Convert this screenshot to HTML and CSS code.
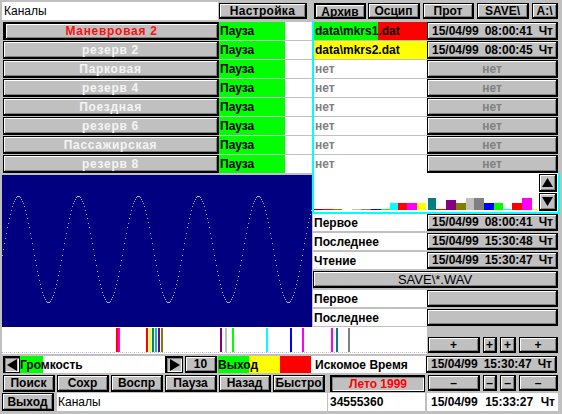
FILE: index.html
```html
<!DOCTYPE html>
<html lang="ru">
<head>
<meta charset="utf-8">
<title>Архив</title>
<link rel="stylesheet" href="styles.css">
</head>
<body>
<div class="app">
  <div class="topbar">
    <div class="field title">Каналы</div>
    <div class="btn setup">Настройка</div>
    <div class="tabs">
      <div class="btn tab active w52">Архив</div>
      <div class="btn tab w52 g2">Осцип</div>
      <div class="btn tab w51 g3">Прот</div>
      <div class="btn tab w52 g3">SAVE\</div>
      <div class="btn tab w26 g3">A:\</div>
    </div>
  </div>

  <div class="main">
    <div class="left">
      <div class="channels">
        <div class="chrow"><div class="btn chan sel">Маневровая 2</div><div class="status">Пауза</div><div class="blank"></div></div>
        <div class="chrow"><div class="btn chan">резерв 2</div><div class="status">Пауза</div><div class="blank"></div></div>
        <div class="chrow"><div class="btn chan">Парковая</div><div class="status">Пауза</div><div class="blank"></div></div>
        <div class="chrow"><div class="btn chan">резерв 4</div><div class="status">Пауза</div><div class="blank"></div></div>
        <div class="chrow"><div class="btn chan">Поездная</div><div class="status">Пауза</div><div class="blank"></div></div>
        <div class="chrow"><div class="btn chan">резерв 6</div><div class="status">Пауза</div><div class="blank"></div></div>
        <div class="chrow"><div class="btn chan">Пассажирская</div><div class="status">Пауза</div><div class="blank"></div></div>
        <div class="chrow"><div class="btn chan">резерв 8</div><div class="status">Пауза</div><div class="blank"></div></div>
      </div>
      <div class="scope">
        <svg class="wave" width="310" height="152" viewBox="0 0 310 152"><path class="wave-path" d=""/></svg>
      </div>
    </div>

    <div class="right">
      <div class="archive">
        <div class="frow"><div class="file"><span class="f-green">data\mkrs1</span><span class="f-red">.dat</span></div><div class="btn date"><span>15/04/99</span><span>08:00:41</span><span>Чт</span></div></div>
        <div class="frow"><div class="file f-yellow">data\mkrs2.dat</div><div class="btn date"><span>15/04/99</span><span>08:00:45</span><span>Чт</span></div></div>
        <div class="frow"><div class="file none">нет</div><div class="btn none">нет</div></div>
        <div class="frow"><div class="file none">нет</div><div class="btn none">нет</div></div>
        <div class="frow"><div class="file none">нет</div><div class="btn none">нет</div></div>
        <div class="frow"><div class="file none">нет</div><div class="btn none">нет</div></div>
        <div class="frow"><div class="file none">нет</div><div class="btn none">нет</div></div>
        <div class="frow"><div class="file none">нет</div><div class="btn none">нет</div></div>
        <div class="chart">
          <div class="bars">
            <i class="bar" style="width:9px;height:1px;background:#800000"></i>
            <i class="bar" style="width:10px;height:1px;background:#ff0000"></i>
            <i class="bar" style="width:9px;height:1px;background:#808000"></i>
            <i class="bar" style="width:10px;height:1px;background:#ffffff"></i>
            <i class="bar" style="width:9px;height:1px;background:#c0c0c0"></i>
            <i class="bar" style="width:10px;height:1px;background:#808080"></i>
            <i class="bar" style="width:10px;height:1px;background:#0000ff"></i>
            <i class="bar" style="width:9px;height:1px;background:#00ff00"></i>
            <i class="bar" style="width:8px;height:7px;background:#00ffff"></i>
            <i class="bar" style="width:9px;height:7px;background:#ff0000"></i>
            <i class="bar" style="width:10px;height:7px;background:#ff00ff"></i>
            <i class="bar" style="width:9px;height:7px;background:#ffff00"></i>
            <i class="bar" style="width:2px;height:0px;background:#ffffff"></i>
            <i class="bar" style="width:8px;height:12px;background:#008080"></i>
            <i class="bar" style="width:10px;height:1px;background:#ff0000"></i>
            <i class="bar" style="width:10px;height:10px;background:#800080"></i>
            <i class="bar" style="width:10px;height:7px;background:#808000"></i>
            <i class="bar" style="width:8px;height:12px;background:#c0c0c0"></i>
            <i class="bar" style="width:10px;height:12px;background:#808080"></i>
            <i class="bar" style="width:10px;height:7px;background:#0000ff"></i>
            <i class="bar" style="width:9px;height:7px;background:#00ff00"></i>
            <i class="bar" style="width:9px;height:1px;background:#00ffff"></i>
            <i class="bar" style="width:10px;height:7px;background:#ff0000"></i>
            <i class="bar" style="width:10px;height:12px;background:#ff00ff"></i>
            <i class="bar" style="width:5px;height:1px;background:#ffff00"></i>
          </div>
          <div class="scroll">
            <div class="btn arrow"><svg width="11" height="9" viewBox="0 0 11 9"><polygon points="5.5,0 11,9 0,9"/></svg></div>
            <div class="btn arrow"><svg width="11" height="9" viewBox="0 0 11 9"><polygon points="0,0 11,0 5.5,9"/></svg></div>
          </div>
        </div>
      </div>
      <div class="info">
        <div class="irow"><div class="label">Первое</div><div class="btn date"><span>15/04/99</span><span>08:00:41</span><span>Чт</span></div></div>
        <div class="irow"><div class="label">Последнее</div><div class="btn date"><span>15/04/99</span><span>15:30:48</span><span>Чт</span></div></div>
        <div class="irow"><div class="label">Чтение</div><div class="btn date"><span>15/04/99</span><span>15:30:47</span><span>Чт</span></div></div>
        <div class="irow"><div class="btn wide">SAVE\*.WAV</div></div>
        <div class="irow"><div class="label">Первое</div><div class="btn"></div></div>
        <div class="irow"><div class="label">Последнее</div><div class="btn"></div></div>
      </div>
    </div>
  </div>

  <div class="bottom">
    <div class="tlrow">
      <div class="strip">
        <i class="mk" style="left:114px;background:#ff0000"></i>
        <i class="mk" style="left:116px;background:#ff00ff"></i>
        <i class="mk" style="left:144px;background:#ff0000"></i>
        <i class="mk" style="left:147px;background:#ffff00"></i>
        <i class="mk" style="left:150px;background:#008080"></i>
        <i class="mk" style="left:153px;background:#00c0c0"></i>
        <i class="mk" style="left:156px;background:#800080"></i>
        <i class="mk" style="left:159px;background:#808000"></i>
        <i class="mk" style="left:218px;background:#800080"></i>
        <i class="mk" style="left:223px;background:#c0c0c0"></i>
        <i class="mk" style="left:230px;background:#00ff00"></i>
        <i class="mk" style="left:264px;background:#00ffff"></i>
        <i class="mk" style="left:288px;background:#0000ff"></i>
        <i class="mk" style="left:300px;background:#ff00ff"></i>
        <i class="mk" style="left:329px;background:#ff00ff"></i>
        <i class="mk" style="left:334px;background:#008080"></i>
        <i class="mk" style="left:346px;background:#808080"></i>
      </div>
      <div class="steps plus">
        <div class="btn s52">+</div>
        <div class="btn s14">+</div>
        <div class="btn s16">+</div>
        <div class="btn s39">+</div>
      </div>
    </div>

    <div class="ctrlrow">
      <div class="btn nav first"><svg width="10" height="12" viewBox="0 0 10 12"><polygon points="10,0 10,12 0,6"/></svg></div>
      <div class="volume">Громкость</div>
      <div class="btn nav"><svg width="10" height="12" viewBox="0 0 10 12"><polygon points="0,0 10,6 0,12"/></svg></div>
      <div class="btn ten">10</div>
      <div class="exitbar">Выход</div>
      <div class="label seek">Искомое Время</div>
      <div class="btn date seekdate"><span>15/04/99</span><span>15:30:47</span><span>Чт</span></div>
    </div>

    <div class="btnrow">
      <div class="btn cmd first">Поиск</div>
      <div class="btn cmd">Сохр</div>
      <div class="btn cmd">Воспр</div>
      <div class="btn cmd">Пауза</div>
      <div class="btn cmd">Назад</div>
      <div class="btn cmd">Быстро</div>
      <div class="btn season">Лето 1999</div>
      <div class="steps minus">
        <div class="btn s52">–</div>
        <div class="btn s14">–</div>
        <div class="btn s16">–</div>
        <div class="btn s39">–</div>
      </div>
    </div>

    <div class="statusrow">
      <div class="btn cmd exit">Выход</div>
      <div class="field st-name">Каналы</div>
      <div class="field st-num">34555360</div>
      <div class="field date st-date"><span>15/04/99</span><span>15:33:27</span><span>Чт</span></div>
    </div>
  </div>
</div>
<script src="script.js"></script>
</body>
</html>
```

FILE: styles.css
```css
* { box-sizing: border-box; }
html, body { margin: 0; padding: 0; }
body {
  width: 562px;
  height: 414px;
  overflow: hidden;
  background: #c0c0c0;
  font-family: "Liberation Sans", Arial, sans-serif;
  font-size: 12px;
  font-weight: bold;
  color: #000;
}

.btn {
  display: flex;
  align-items: center;
  justify-content: center;
  background: #c0c0c0;
  border: 1px solid #000;
  border-right-width: 2px;
  border-bottom-width: 2px;
  box-shadow: inset 1px 1px 0 #fff, inset -1px -1px 0 #808080;
  white-space: nowrap;
  line-height: 1;
}

.field {
  background: #fff;
  display: flex;
  align-items: center;
  white-space: nowrap;
}

/* top bar */
.topbar { display: flex; height: 21px; padding-top: 2px; }
.title { margin-left: 2px; width: 216px; height: 18px; padding-left: 2px; font-weight: normal; }
.setup { margin-left: 1px; width: 88px; height: 16px; margin-top: 1px; letter-spacing: 0.3px; }
.tabs { display: flex; margin-left: 7px; margin-top: 1px; }
.tab { height: 16px; }
.tab.active { border: 2px solid #000; padding-top: 2px; }
.w52 { width: 52px; }
.w51 { width: 51px; }
.w26 { width: 26px; }
.g2 { margin-left: 2px; }
.g3 { margin-left: 3px; }

/* main */
.main { display: grid; grid-template-columns: 312px 248px; height: 306px; }

.chrow {
  display: grid;
  grid-template-columns: 216px 66px 27px;
  height: 19px;
  padding: 1px 0 0 3px;
}
.chan { color: #f4f4f4; letter-spacing: 0.7px; }
.chan.sel { color: #ff1010; border: 2px solid #000; border-left-width: 3px; }
.status { background: #00ff00; display: flex; align-items: center; padding-left: 1px; }
.blank { background: #fff; }

.scope { margin: 2px 0 0 2px; width: 310px; height: 152px; background: #000080; }
.wave { display: block; }
.wave-path { fill: #5cdcc8; }

/* right column */
.archive { border-left: 2px solid #00ffff; }
.frow {
  display: grid;
  grid-template-columns: 113px 131px;
  height: 19px;
  padding-top: 1px;
}
.file { display: flex; align-items: center; background: #fff; white-space: nowrap; }
.f-green { background: #00ff00; height: 100%; display: flex; align-items: center; padding-left: 1px; }
.f-red { background: #ff0000; flex: 1; height: 100%; display: flex; align-items: center; }
.f-yellow { background: #ffff00; padding-left: 1px; }
.none { color: #808080; }
.file.none { padding-left: 1px; }

.date { justify-content: space-between; padding: 0 3px 0 4px; }

.chart {
  display: flex;
  height: 41px;
  background: #fff;
  border-right: 2px solid #00ffff;
  border-bottom: 2px solid #00ffff;
}
.bars { flex: 1; display: flex; align-items: flex-end; padding-bottom: 2px; }
.bar { display: block; flex: none; }
.scroll { display: flex; flex-direction: column; gap: 1px; padding: 1px 0 0; width: 19px; }
.arrow { width: 18px; height: 18px; border-width: 1px 2px 2px 1px; }
.arrow svg { display: block; }

.info { display: flex; flex-direction: column; gap: 2px; padding-left: 1px; }
.irow { display: grid; grid-template-columns: 114px 131px; height: 17px; }
.label { background: #fff; display: flex; align-items: center; padding-left: 1px; white-space: nowrap; }
.wide { grid-column: 1 / 3; font-weight: normal; font-size: 13px; }

/* bottom */
.tlrow { display: flex; height: 28px; }
.strip {
  position: relative;
  margin-left: 2px;
  width: 425px;
  height: 27px;
  background: #fff;
}
.strip::after {
  content: "";
  position: absolute;
  left: 0;
  right: 0;
  bottom: 1px;
  height: 1px;
  background: repeating-linear-gradient(90deg, #ff8080 0 1px, #fff 1px 2px, #80ffff 2px 3px, #fff 3px 4px, #ff80ff 4px 5px, #fff 5px 6px, #a0e0a0 6px 7px, #fff 7px 8px);
}
.mk { position: absolute; top: 1px; bottom: 1px; width: 2px; }

.steps { display: flex; gap: 3px; margin-left: 1px; }
.plus { margin-top: 10px; height: 16px; }
.steps .btn { height: 16px; }
.s52 { width: 52px; }
.s14 { width: 14px; }
.s16 { width: 16px; }
.s39 { width: 39px; }

.ctrlrow { display: flex; height: 19px; padding-top: 1px; }
.ctrlrow > * { height: 17px; }
.nav { width: 18px; border-width: 2px 1px 1px 2px; box-shadow: inset 1px 1px 0 #808080, inset -1px -1px 0 #fff; }
.nav.first { margin-left: 3px; width: 17px; }
.volume {
  width: 145px;
  display: flex;
  align-items: center;
  background: linear-gradient(90deg, #00ff00 0 23px, #fff 23px);
}
.ten { width: 32px; margin-left: 2px; }
.exitbar {
  width: 93px;
  margin-left: 1px;
  display: flex;
  align-items: center;
  background: linear-gradient(90deg, #00ff00 0 31px, #ffff00 31px 62px, #ff0000 62px);
}
.seek { width: 115px; padding-left: 4px; }
.seekdate { width: 131px; }

.btnrow { display: flex; height: 19px; padding-top: 1px; }
.btnrow > .btn { height: 17px; }
.cmd { width: 52px; margin-left: 2px; }
.cmd.first { margin-left: 3px; }
.season {
  width: 95px;
  margin-left: 5px;
  color: #ff0000;
  border: 2px solid #000;
  border-right-width: 1px;
  border-bottom-width: 1px;
  box-shadow: inset 1px 1px 0 #808080, inset -1px -1px 0 #fff;
}
.minus { margin-left: 3px; }

.statusrow { display: flex; height: 19px; }
.statusrow > * { height: 18px; }
.exit { margin-left: 2px; }
.st-name { width: 270px; margin-left: 3px; padding-left: 1px; font-weight: normal; }
.st-num { width: 97px; margin-left: 1px; padding-left: 2px; }
.st-date { width: 131px; margin-left: 2px; justify-content: space-between; padding: 0 3px 0 4px; }
```

FILE: script.js
```js
(function () {
  var path = document.querySelector('.wave-path');
  var d = '';
  for (var x = 0; x < 310; x++) {
    var y = Math.round(74 - 53 * Math.sin(2 * Math.PI * (x - 1) / 60));
    d += 'M' + x + ' ' + y + 'h1v1h-1z';
  }
  path.setAttribute('d', d);
})();
```
